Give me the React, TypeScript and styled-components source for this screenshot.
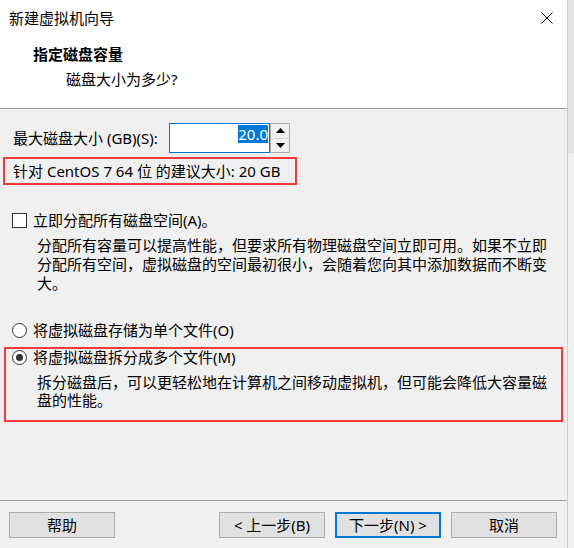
import styled, { createGlobalStyle } from "styled-components";

const GlobalStyle = createGlobalStyle`
  html, body {
    margin: 0;
    padding: 0;
    background: #f0f0f0;
  }
  body {
    font-family: "Noto Sans", "Noto Sans CJK SC", sans-serif;
    font-size: 15px;
    color: #000;
  }
`

export default function App() {
    return (
        <>
            <GlobalStyle/>
            <Screen>
                <Dialog>
                    <Header>
                        <TitleBar>
                            <span>新建虚拟机向导</span>
                            <CloseIcon width="12" height="12" viewBox="0 0 12 12">
                                <path d="M0.5 0.5 L11.5 11.5 M11.5 0.5 L0.5 11.5" stroke="#000" strokeWidth="1"/>
                            </CloseIcon>
                        </TitleBar>
                        <Heading>指定磁盘容量</Heading>
                        <SubHeading>磁盘大小为多少?</SubHeading>
                    </Header>

                    <Body>
                        <SizeRow>
                            <SizeLabel>最大磁盘大小 (GB)(S):</SizeLabel>
                            <NumberBox>
                                <Selected>20.0</Selected>
                            </NumberBox>
                            <Spinner>
                                <SpinButton>
                                    <svg width="9" height="5" viewBox="0 0 9 5"><path d="M0 5 L4.5 0 L9 5 Z" fill="#000"/></svg>
                                </SpinButton>
                                <SpinButton>
                                    <svg width="9" height="5" viewBox="0 0 9 5"><path d="M0 0 L4.5 5 L9 0 Z" fill="#000"/></svg>
                                </SpinButton>
                            </Spinner>
                        </SizeRow>

                        <Recommend>针对 CentOS 7 64 位 的建议大小: 20 GB</Recommend>

                        <OptionRow $top={25}>
                            <CheckBox/>
                            <span>立即分配所有磁盘空间(A)。</span>
                        </OptionRow>
                        <Description $top={6} $left={37} $leading={19}>
                            分配所有容量可以提高性能，但要求所有物理磁盘空间立即可用。如果不立即分配所有空间，虚拟磁盘的空间最初很小，会随着您向其中添加数据而不断变大。
                        </Description>

                        <OptionRow $top={27}>
                            <Radio/>
                            <span>将虚拟磁盘存储为单个文件(O)</span>
                        </OptionRow>

                        <SplitBox>
                            <OptionRow $top={0} $left={0} $leading={16}>
                                <Radio $checked/>
                                <span>将虚拟磁盘拆分成多个文件(M)</span>
                            </OptionRow>
                            <Description $top={8} $left={25} $leading={18}>
                                拆分磁盘后，可以更轻松地在计算机之间移动虚拟机，但可能会降低大容量磁盘的性能。
                            </Description>
                        </SplitBox>
                    </Body>

                    <Footer>
                        <HelpButton>帮助</HelpButton>
                        <Button>&lt; 上一步(B)</Button>
                        <Button $primary>下一步(N) &gt;</Button>
                        <Button>取消</Button>
                    </Footer>
                </Dialog>
                <Outside/>
            </Screen>
        </>
    )
}

const Screen = styled.div`
    width: 574px;
    height: 548px;
    display: flex;
    overflow: hidden;
`

const Dialog = styled.div`
    width: 567px;
    display: flex;
    flex-direction: column;
    background: #f0f0f0;
`

const Outside = styled.div`
    flex: 1;
    border-left: 1px solid #cdcdcd;
    background: linear-gradient(#e3e3e3 0 153px, #f0f0f0 153px);
`

const Header = styled.header`
    height: 108px;
    background: #fff;
    border-bottom: 1px solid #a0a0a0;
`

const TitleBar = styled.div`
    height: 36px;
    display: flex;
    align-items: center;
    justify-content: space-between;
    padding: 0 14px 0 9px;
    line-height: 20px;
`

const CloseIcon = styled.svg`
    display: block;
`

const Heading = styled.div`
    margin: 8px 0 0 33px;
    font-weight: bold;
    line-height: 20px;
`

const SubHeading = styled.div`
    margin: 5px 0 0 66px;
    line-height: 20px;
`

const Body = styled.main`
    flex: 1;
    padding-top: 14px;
`

const SizeRow = styled.div`
    display: flex;
    align-items: center;
    height: 30px;
    padding-left: 13px;
`

const SizeLabel = styled.span`
    width: 156px;
    line-height: 20px;
`

const NumberBox = styled.div`
    box-sizing: border-box;
    width: 101px;
    height: 30px;
    border: 1px solid #0078d7;
    background: #fff;
    display: flex;
    justify-content: flex-end;
    align-items: flex-start;
    padding: 1px 1px 0 0;
`

const Selected = styled.span`
    background: #0078d7;
    color: #fff;
    line-height: 18px;
`

const Spinner = styled.div`
    box-sizing: border-box;
    width: 20px;
    height: 30px;
    border: 1px solid #adadad;
    display: flex;
    flex-direction: column;
    background: #f0f0f0;
`

const SpinButton = styled.div`
    flex: 1;
    display: flex;
    align-items: center;
    justify-content: center;
    & + & {
        border-top: 1px solid #d4d4d4;
    }
`

const Recommend = styled.div`
    box-sizing: border-box;
    margin: 4px 0 0 3px;
    width: 294px;
    height: 28px;
    border: 2px solid #f33b3b;
    padding-left: 8px;
    display: flex;
    align-items: center;
    line-height: 20px;
`

const OptionRow = styled.div<{ $top: number; $left?: number; $leading?: number }>`
    display: flex;
    align-items: center;
    gap: 6px;
    margin-top: ${p => p.$top}px;
    margin-left: ${p => p.$left ?? 12}px;
    line-height: ${p => p.$leading ?? 20}px;
`

const CheckBox = styled.span`
    box-sizing: border-box;
    width: 15px;
    height: 15px;
    border: 1px solid #333;
    background: #fff;
`

const Radio = styled.span<{ $checked?: boolean }>`
    box-sizing: border-box;
    width: 15px;
    height: 15px;
    border-radius: 50%;
    border: 1px solid #333;
    background: #fff;
    display: flex;
    align-items: center;
    justify-content: center;
    &::after {
        content: "";
        width: 7px;
        height: 7px;
        border-radius: 50%;
        background: ${p => p.$checked ? "#333" : "transparent"};
    }
`

const Description = styled.p<{ $top: number; $left: number; $leading: number }>`
    margin: ${p => p.$top}px 0 0 ${p => p.$left}px;
    width: 516px;
    line-height: ${p => p.$leading}px;
`

const SplitBox = styled.div`
    box-sizing: border-box;
    margin: 7px 0 0 4px;
    width: 559px;
    height: 75px;
    border: 2px solid #f33b3b;
    padding-left: 6px;
`

const Footer = styled.footer`
    box-sizing: border-box;
    height: 48px;
    border-top: 1px solid #a0a0a0;
    padding: 11px 10px 0 9px;
    display: flex;
    align-items: flex-start;
    gap: 10px;
`

const Button = styled.button<{ $primary?: boolean }>`
    box-sizing: border-box;
    width: 106px;
    height: 26px;
    padding: 0;
    font-family: inherit;
    font-size: 15px;
    color: #000;
    background: #e1e1e1;
    border: ${p => p.$primary ? "2px solid #0078d7" : "1px solid #adadad"};
    border-radius: 0;
    line-height: 20px;
`

const HelpButton = styled(Button)`
    margin-right: auto;
`
